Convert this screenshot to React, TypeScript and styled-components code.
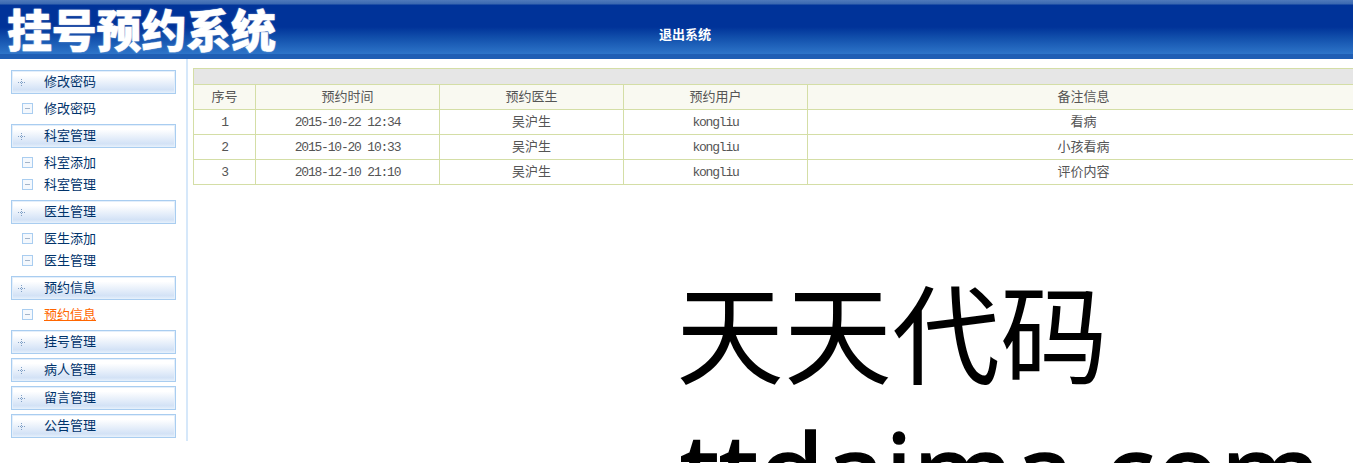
import React from 'react';
import styled, { createGlobalStyle } from 'styled-components';

interface MenuGroup {
  title: string;
  items: string[];
}

const menuGroups: MenuGroup[] = [
  { title: '修改密码', items: ['修改密码'] },
  { title: '科室管理', items: ['科室添加', '科室管理'] },
  { title: '医生管理', items: ['医生添加', '医生管理'] },
  { title: '预约信息', items: ['预约信息'] },
  { title: '挂号管理', items: [] },
  { title: '病人管理', items: [] },
  { title: '留言管理', items: [] },
  { title: '公告管理', items: [] },
];

const records = [
  { id: 1, time: '2015-10-22 12:34', doctor: '吴沪生', user: 'kongliu', note: '看病' },
  { id: 2, time: '2015-10-20 10:33', doctor: '吴沪生', user: 'kongliu', note: '小孩看病' },
  { id: 3, time: '2018-12-10 21:10', doctor: '吴沪生', user: 'kongliu', note: '评价内容' },
];

const columns = ['序号', '预约时间', '预约医生', '预约用户', '备注信息'];
const columnWidths = [62, 184, 184, 184, 552];

const PlusIcon = () => (
  <svg width="7" height="7" viewBox="0 0 7 7">
    <path d="M3 0h1v1H3zM3 2h1v1H3zM3 4h1v1H3zM3 6h1v1H3zM0 3h1v1H0zM2 3h1v1H2zM4 3h1v1H4zM6 3h1v1H6z" fill="#7f9fc6" />
  </svg>
);

const MinusIcon = () => (
  <svg width="11" height="11" viewBox="0 0 11 11">
    <rect x="0.5" y="0.5" width="10" height="10" fill="#f4f8fd" stroke="#a9cdf0" />
    <path d="M3 5h5v1H3z" fill="#a3b4c9" />
  </svg>
);

const App: React.FC = () => {
  return (
    <>
      <GlobalStyle />
      <Page>
        <Header>
          <Logo>挂号预约系统</Logo>
          <Logout>退出系统</Logout>
        </Header>
        <Body>
          <Sidebar>
            {menuGroups.map((group) => (
              <Group key={group.title} hasItems={group.items.length > 0}>
                <GroupTitle>
                  <GroupIcon>
                    <PlusIcon />
                  </GroupIcon>
                  <span>{group.title}</span>
                </GroupTitle>
                {group.items.map((item, index) => (
                  <MenuItem key={item + index} active={item === '预约信息'}>
                    <MinusIcon />
                    <span>{item}</span>
                  </MenuItem>
                ))}
              </Group>
            ))}
          </Sidebar>
          <Main>
            <Table>
              <colgroup>
                {columnWidths.map((width, index) => (
                  <col key={index} width={width} />
                ))}
              </colgroup>
              <thead>
                <tr>
                  <TitleCell colSpan={5} />
                </tr>
                <tr>
                  {columns.map((column) => (
                    <HeadCell key={column}>
                      <CellText>{column}</CellText>
                    </HeadCell>
                  ))}
                </tr>
              </thead>
              <tbody>
                {records.map((record) => (
                  <tr key={record.id}>
                    <Cell mono>{record.id}</Cell>
                    <Cell mono>{record.time}</Cell>
                    <Cell>
                      <CellText>{record.doctor}</CellText>
                    </Cell>
                    <Cell mono>{record.user}</Cell>
                    <Cell>
                      <CellText>{record.note}</CellText>
                    </Cell>
                  </tr>
                ))}
              </tbody>
            </Table>
            <Watermark>
              天天代码
              <br />
              <WatermarkLatin>ttdaima.com</WatermarkLatin>
            </Watermark>
          </Main>
        </Body>
      </Page>
    </>
  );
};

export default App;

const GlobalStyle = createGlobalStyle`
  html, body {
    margin: 0;
    padding: 0;
    height: 463px;
    overflow: hidden;
    background: #fff;
    font-family: "Noto Sans CJK SC", "Liberation Sans", sans-serif;
  }
`;

const Page = styled.div`
  width: 1353px;
  height: 463px;
  overflow: hidden;
`;

const Header = styled.header`
  height: 59px;
  display: flex;
  align-items: flex-start;
  background: linear-gradient(
    to bottom,
    #4f7abb 0,
    #3a68b0 4px,
    #003399 5px,
    #003399 27px,
    #1250ac 38px,
    #2e75c9 54px,
    #1f5eb4 54px,
    #1f5eb4 59px
  );
`;

const Logo = styled.div`
  width: 659px;
  padding-left: 7px;
  box-sizing: border-box;
  font-size: 45px;
  line-height: 57px;
  font-weight: 900;
  letter-spacing: -0.2px;
  color: #fff;
  white-space: nowrap;
  -webkit-text-stroke: 0.4px #fff;
  text-shadow: 0 0 2px rgba(255, 255, 255, 0.5);
`;

const Logout = styled.a`
  margin-top: 25px;
  font-size: 13px;
  line-height: 18px;
  font-weight: 700;
  color: #fff;
`;

const Body = styled.div`
  display: flex;
  align-items: flex-start;
`;

const Sidebar = styled.nav`
  width: 175px;
  height: 371px;
  padding: 11px 0 0 11px;
  border-right: 2px solid #d6e8fa;
  flex-shrink: 0;
`;

const Group = styled.div<{ hasItems: boolean }>`
  width: 165px;
  margin-bottom: ${({ hasItems }) => (hasItems ? '4px' : '0')};
`;

const GroupTitle = styled.div`
  height: 24px;
  box-sizing: border-box;
  margin-bottom: 4px;
  padding-bottom: 4px;
  display: flex;
  align-items: center;
  border: 1px solid #a9cdf0;
  box-shadow: inset 0 0 0 1px #e4effb;
  font-size: 13px;
  color: #00336b;
  background: linear-gradient(to bottom, #ffffff 0, #ffffff 20%, #d3e2f6 85%, #e6f0fb 100%);
`;

const GroupIcon = styled.span`
  width: 32px;
  display: flex;
  padding: 4px 0 0 6px;
  box-sizing: border-box;
`;

const MenuItem = styled.a<{ active?: boolean }>`
  height: 22px;
  box-sizing: border-box;
  display: flex;
  align-items: center;
  gap: 11px;
  padding-left: 11px;
  font-size: 13px;
  color: ${({ active }) => (active ? '#ff6600' : '#00336b')};

  span {
    margin-top: -4px;
    text-decoration: ${({ active }) => (active ? 'underline' : 'none')};
  }

  svg {
    margin-top: -1px;
  }
`;

const Main = styled.main`
  padding: 9px 0 0 5px;
  min-width: 0;
  flex: 1;
`;

const Table = styled.table`
  width: 1166px;
  border-collapse: collapse;
  table-layout: fixed;
`;

const TitleCell = styled.td`
  height: 15px;
  padding: 0;
  background: #e6e6e6;
  border: 1px solid #d4dea6;
`;

const HeadCell = styled.th`
  height: 24px;
  padding: 0;
  font-size: 13px;
  font-weight: 400;
  color: #555;
  background: #f9f9f1;
  border: 1px solid #d4dea6;
`;

const CellText = styled.span`
  display: block;
  margin-top: -3px;
`;

const Cell = styled.td<{ mono?: boolean }>`
  height: 24px;
  padding: 0;
  text-align: center;
  font-family: ${({ mono }) =>
    mono ? '"Liberation Mono", monospace' : '"Noto Sans CJK SC", sans-serif'};
  font-size: 13px;
  letter-spacing: ${({ mono }) => (mono ? '-1.2px' : '0')};
  color: #555;
  border: 1px solid #d4dea6;
`;

const Watermark = styled.div`
  margin: 82px 0 0 483px;
  font-family: "Noto Sans", "Noto Sans CJK SC", sans-serif;
  font-size: 108px;
  line-height: 136px;
  color: #000;
  white-space: nowrap;
`;

const WatermarkLatin = styled.span`
  margin-left: 4px;
  -webkit-text-stroke: 1.5px #000;
`;
